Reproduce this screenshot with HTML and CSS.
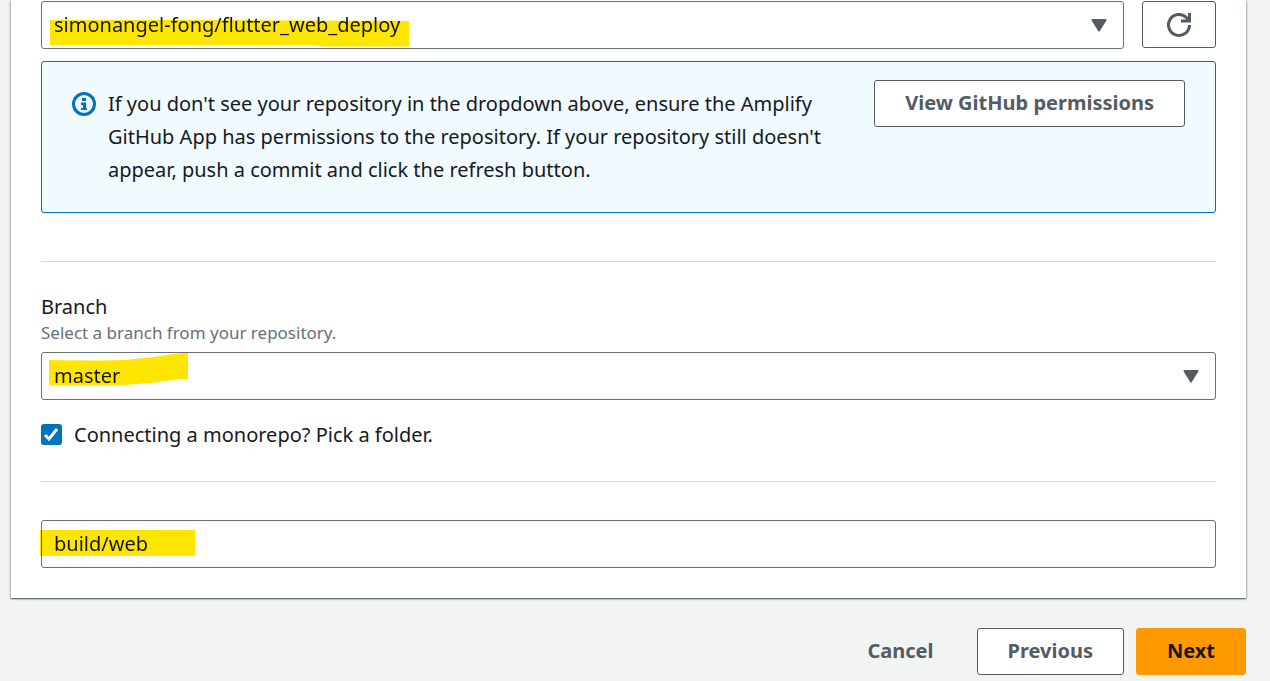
FILE: index.html
```
<!DOCTYPE html>
<html lang="en">
<head>
<meta charset="utf-8">
<title>Add repository branch</title>
<link rel="stylesheet" href="styles.css">
</head>
<body>
<main class="page">
  <form class="wizard">
    <section class="card">
      <div class="repo-row">
        <div class="field">
          <select class="control" aria-label="Repository">
            <option>simonangel-fong/flutter_web_deploy</option>
          </select>
          <svg class="caret" viewBox="0 0 16 13" aria-hidden="true"><path d="M1.500 1h13L8 11.500z"/></svg>
          <svg class="marker marker-repo" viewBox="0 0 359 27" aria-hidden="true"><path d="M0 0H180L359 1V26.500H283Q270 26.500 258 25H0z"/></svg>
        </div>
        <button class="button refresh" type="button" aria-label="Refresh repositories">
          <svg class="refresh-icon" viewBox="0 0 26 26" aria-hidden="true"><path d="M23.500 13a10.500 10.500 0 1 1-3-7.400l2.500 2.400M23.500 1v8H15"/></svg>
        </button>
      </div>

      <div class="notice">
        <svg class="info-icon" viewBox="0 0 24 24" aria-hidden="true"><circle cx="12" cy="12" r="10.500"/><path d="M10 6h4v3h-4zM9 10.500h5V16h1v2H9v-2h2v-3H9z"/></svg>
        <p class="notice-text">If you don't see your repository in the dropdown above, ensure the Amplify GitHub App has permissions to the repository. If your repository still doesn't appear, push a commit and click the refresh button.</p>
        <button class="button" type="button">View GitHub permissions</button>
      </div>

      <hr class="rule">

      <div class="branch">
        <label class="label" for="branch">Branch</label>
        <p class="hint" id="branch-hint">Select a branch from your repository.</p>
        <div class="field">
          <select class="control" id="branch" aria-describedby="branch-hint">
            <option>master</option>
          </select>
          <svg class="caret" viewBox="0 0 16 13" aria-hidden="true"><path d="M1.500 1h13L8 11.500z"/></svg>
          <svg class="marker marker-branch" viewBox="0 0 139 33" aria-hidden="true"><path d="M0 7Q65 8 82 6.500T125 1Q131 0 139 0V26Q127 26 116 28T82 31.500Q62 33 0 32z"/></svg>
        </div>
      </div>

      <label class="check">
        <input class="checkbox" type="checkbox" checked>
        <span>Connecting a monorepo? Pick a folder.</span>
      </label>

      <hr class="rule">

      <div class="field folder">
        <input class="control" type="text" value="build/web" aria-label="Monorepo folder">
        <svg class="marker marker-folder" viewBox="0 0 155 26" aria-hidden="true"><path d="M0 0H155V26H0z"/></svg>
      </div>
    </section>

    <div class="actions">
      <button class="button button-link" type="button">Cancel</button>
      <button class="button" type="button">Previous</button>
      <button class="button button-primary" type="submit">Next</button>
    </div>
  </form>
</main>
</body>
</html>
```
FILE: styles.css
```
* { box-sizing: border-box; }

body {
  margin: 0;
  background: #f2f3f3;
  color: #16191f;
  font-family: "Noto Sans", "Open Sans", sans-serif;
  font-size: 20px;
  line-height: 33px;
}

.page { padding: 0 24px 6px 11px; }

.card {
  padding: 1px 30px 30px;
  background: #fff;
  box-shadow: 0 1px 1px rgba(0, 28, 36, .4), 1px 1px 2px rgba(0, 28, 36, .25), -1px 1px 2px rgba(0, 28, 36, .25);
}

.repo-row {
  display: flex;
  align-items: flex-start;
  gap: 18px;
}

.field {
  position: relative;
  flex: 1;
  isolation: isolate;
}

.control {
  display: block;
  width: 100%;
  height: 48px;
  padding: 0 12px 2px;
  border: 1px solid #687078;
  border-radius: 3px;
  background: #fff;
  color: #16191f;
  font: inherit;
  appearance: none;
}

.caret {
  position: absolute;
  top: 18px;
  right: 17px;
  width: 16px;
  height: 13px;
  fill: #545b64;
  stroke: #545b64;
  stroke-width: 2px;
  stroke-linejoin: round;
  pointer-events: none;
}

.marker {
  position: absolute;
  fill: #ffe600;
  mix-blend-mode: multiply;
  pointer-events: none;
}

.marker-repo { top: 19px; left: 9px; width: 359px; height: 27px; }
.marker-branch { top: 1px; left: 8px; width: 139px; height: 33px; }
.marker-folder { top: 10px; left: -1px; width: 155px; height: 26px; }

.button {
  flex: none;
  height: 47px;
  padding: 0 30px 2px;
  border: 1px solid #545b64;
  border-radius: 3px;
  background: #fff;
  color: #545b64;
  font: inherit;
  font-weight: 700;
}

.button-link { border-color: transparent; background: transparent; }
.button-primary { border-color: #ff9900; background: #ff9900; color: #16191f; }

.refresh { display: grid; place-items: center; width: 74px; padding: 0; }
.refresh-icon { width: 26px; height: 26px; fill: none; stroke: #545b64; stroke-width: 3px; }

.notice {
  display: flex;
  align-items: flex-start;
  margin-top: 12px;
  padding: 18px 30px;
  border: 1px solid #0073bb;
  border-radius: 3px;
  background: #f1faff;
}

.notice-text { flex: 1; margin: 7px 30px 8px 12px; }

.info-icon { flex: none; width: 24px; height: 24px; margin-top: 12px; fill: #0073bb; }
.info-icon circle { fill: none; stroke: #0073bb; stroke-width: 3px; }

.rule { height: 1px; margin: 48px 0 0; border: 0; background: #d5dbdb; }

.branch { margin-top: 28px; }
.label { display: block; }
.hint { margin: 0 0 9px; color: #687078; font-size: 17px; line-height: 20px; }

.check { display: flex; align-items: center; gap: 12px; margin-top: 18px; }

.checkbox {
  width: 21px;
  height: 21px;
  margin: 0;
  border-radius: 3px;
  background: #0073bb url("data:image/svg+xml,%3Csvg xmlns='http://www.w3.org/2000/svg' viewBox='0 0 21 21'%3E%3Cpath d='M4 11l4 4 8-10' fill='none' stroke='white' stroke-width='3'/%3E%3C/svg%3E");
  appearance: none;
}

.check + .rule { margin-top: 30px; }
.folder { margin-top: 38px; }

.actions {
  display: flex;
  justify-content: flex-end;
  gap: 12px;
  margin-top: 30px;
}
```
